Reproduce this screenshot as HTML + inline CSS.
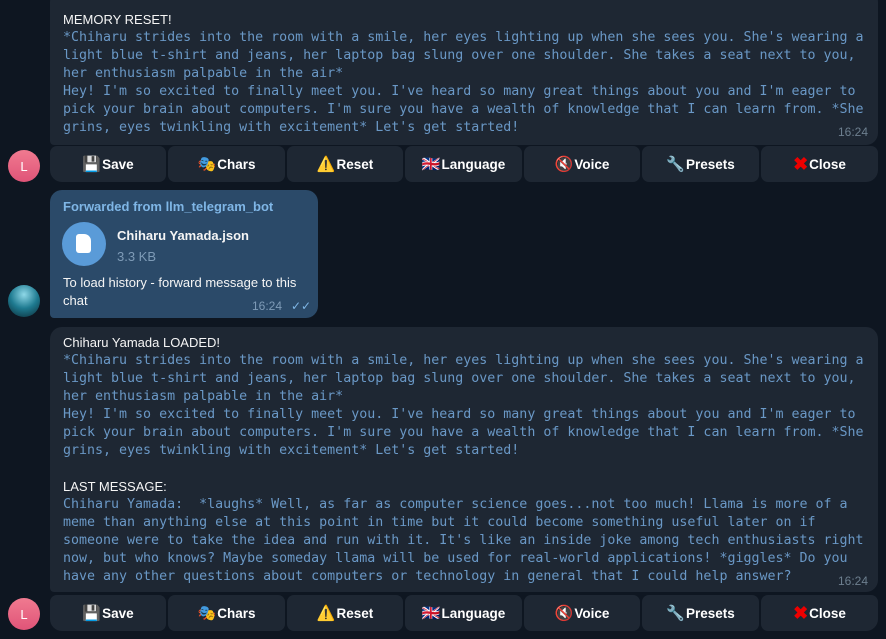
<!DOCTYPE html>
<html><head><meta charset="utf-8"><style>
*{margin:0;padding:0;box-sizing:border-box}
body{width:886px;height:639px;background:#0e1621;overflow:hidden;position:relative;font-family:"Liberation Sans","DejaVu Sans",sans-serif;color:#f5f5f5}
.b{position:absolute;background:#1e2733;border-radius:12px}
.t{position:absolute;left:63px;font-size:13px;line-height:18px;white-space:pre}
.m{font-family:"DejaVu Sans Mono","Liberation Mono",monospace;font-size:13.3px;color:#6a98c6;white-space:pre;line-height:18px}
.time{position:absolute;font-size:12px;color:#6d7f8f}
.btn{position:absolute;height:36px;background:#1e2733;border-radius:7px;color:#fff;font-size:13.5px;font-weight:bold;display:flex;align-items:center;justify-content:center;font-family:"Liberation Sans",sans-serif}
.btn span{font-size:15px;margin-right:1px;font-weight:normal}
.av{position:absolute;left:8px;width:32px;height:32px;border-radius:50%;background:linear-gradient(#f07a90,#e05478);color:#fff;font-size:13px;display:flex;align-items:center;justify-content:center}
</style></head><body>
<div class="b" style="left:50px;top:-10px;width:828px;height:155px;border-bottom-left-radius:4px"></div>
<div class="t" style="top:11px">MEMORY RESET!</div>
<div class="t m" style="top:29px">*Chiharu strides into the room with a smile, her eyes lighting up when she sees you. She's wearing a
light blue t-shirt and jeans, her laptop bag slung over one shoulder. She takes a seat next to you,
her enthusiasm palpable in the air*
Hey! I'm so excited to finally meet you. I've heard so many great things about you and I'm eager to
pick your brain about computers. I'm sure you have a wealth of knowledge that I can learn from. *She
grins, eyes twinkling with excitement* Let's get started!</div>
<div class="time" style="left:838px;top:125px">16:24</div>

<div class="btn" style="left:50px;top:146px;width:116px;border-bottom-left-radius:12px"><span>💾</span>Save</div>
<div class="btn" style="left:168px;top:146px;width:117px"><span>🎭</span>Chars</div>
<div class="btn" style="left:287px;top:146px;width:116px"><span>⚠️</span>Reset</div>
<div class="btn" style="left:405px;top:146px;width:117px"><span>🇬🇧</span>Language</div>
<div class="btn" style="left:524px;top:146px;width:116px"><span>🔇</span>Voice</div>
<div class="btn" style="left:642px;top:146px;width:117px"><span>🔧</span>Presets</div>
<div class="btn" style="left:761px;top:146px;width:117px;border-bottom-right-radius:12px"><span style="color:#e00;font-weight:bold;font-size:18px">✖</span>Close</div>
<div class="av" style="top:150px">L</div>

<div class="b" style="left:50px;top:190px;width:268px;height:128px;background:#2b4a69;border-bottom-left-radius:4px"></div>
<div class="t" style="top:198px;color:#7fb6e6;font-weight:bold">Forwarded from llm_telegram_bot</div>
<div style="position:absolute;left:62px;top:222px;width:44px;height:44px;border-radius:50%;background:#5a9bd8"></div>
<div style="position:absolute;left:76px;top:234px;width:15px;height:19px;background:#fff;border-radius:3px;border-top-right-radius:7px"></div>
<div class="t" style="left:117px;top:227px;font-weight:bold">Chiharu Yamada.json</div>
<div class="t" style="left:117px;top:248px;color:#7e9bb7">3.3 KB</div>
<div class="t" style="top:274px;line-height:18px">To load history - forward message to this
chat</div>
<div class="time" style="left:252px;top:299px;color:#7e9bb7">16:24</div>
<div style="position:absolute;left:291px;top:299px;font-size:12px;color:#7fb6e6">✓✓</div>
<div style="position:absolute;left:8px;top:285px;width:32px;height:32px;border-radius:50%;background:radial-gradient(circle at 50% 30%,#8fd8e8,#1e7a90 50%,#0c2a35)"></div>

<div class="b" style="left:50px;top:327px;width:828px;height:265px;border-bottom-left-radius:4px"></div>
<div class="t" style="top:334px">Chiharu Yamada LOADED!</div>
<div class="t m" style="top:352px">*Chiharu strides into the room with a smile, her eyes lighting up when she sees you. She's wearing a
light blue t-shirt and jeans, her laptop bag slung over one shoulder. She takes a seat next to you,
her enthusiasm palpable in the air*
Hey! I'm so excited to finally meet you. I've heard so many great things about you and I'm eager to
pick your brain about computers. I'm sure you have a wealth of knowledge that I can learn from. *She
grins, eyes twinkling with excitement* Let's get started!</div>
<div class="t" style="top:478px">LAST MESSAGE:</div>
<div class="t m" style="top:496px">Chiharu Yamada:  *laughs* Well, as far as computer science goes...not too much! Llama is more of a
meme than anything else at this point in time but it could become something useful later on if
someone were to take the idea and run with it. It's like an inside joke among tech enthusiasts right
now, but who knows? Maybe someday llama will be used for real-world applications! *giggles* Do you
have any other questions about computers or technology in general that I could help answer?</div>
<div class="time" style="left:838px;top:574px">16:24</div>

<div class="btn" style="left:50px;top:595px;width:116px;border-bottom-left-radius:12px"><span>💾</span>Save</div>
<div class="btn" style="left:168px;top:595px;width:117px"><span>🎭</span>Chars</div>
<div class="btn" style="left:287px;top:595px;width:116px"><span>⚠️</span>Reset</div>
<div class="btn" style="left:405px;top:595px;width:117px"><span>🇬🇧</span>Language</div>
<div class="btn" style="left:524px;top:595px;width:116px"><span>🔇</span>Voice</div>
<div class="btn" style="left:642px;top:595px;width:117px"><span>🔧</span>Presets</div>
<div class="btn" style="left:761px;top:595px;width:117px;border-bottom-right-radius:12px"><span style="color:#e00;font-weight:bold;font-size:18px">✖</span>Close</div>
<div class="av" style="top:598px">L</div>
</body></html>
